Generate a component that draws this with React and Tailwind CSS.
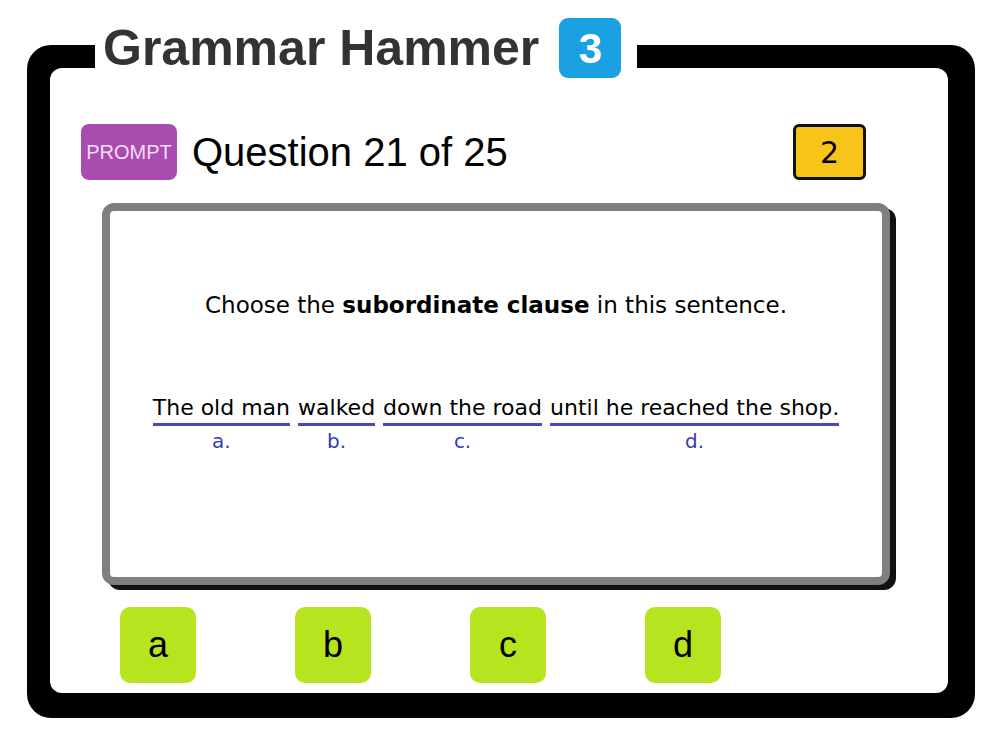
import React from "react";

const comic = "font-['Comic_Sans_MS','DejaVu_Sans',sans-serif]";
const arial = "font-['Liberation_Sans',Arial,sans-serif]";

const segments = [
  { text: "The old man", label: "a." },
  { text: "walked", label: "b." },
  { text: "down the road", label: "c." },
  { text: "until he reached the shop.", label: "d." },
];

export default function App() {
  return (
    <div className="min-h-[750px] w-[1000px] bg-white pt-[45px] pl-[27px]">
      {/* Outer black frame */}
      <div className="relative w-[948px] rounded-[24px] bg-black pt-[23px] pl-[23px] pr-[27px] pb-[25px]">
        {/* Title sitting on the frame */}
        <div className="absolute left-[68px] top-[-27px] flex h-[60px] items-center bg-white pl-2 pr-4">
          <h1 className={`${arial} text-[50px] font-bold leading-none text-[#333333]`}>
            Grammar Hammer
          </h1>
          <span className={`${arial} ml-[20px] flex h-[60px] w-[62px] items-center justify-center rounded-[9px] bg-[#1ba1e2] text-[42px] font-bold text-white`}>
            3
          </span>
        </div>

        {/* White inner panel */}
        <div className="h-[625px] rounded-[12px] bg-white px-[31px] pt-[56px] pb-[10px]">
          {/* Header row */}
          <div className="flex h-[56px] items-center">
            <button className={`${arial} flex h-[56px] w-[96px] items-center justify-center rounded-[8px] bg-[#a84caf] text-[20px] text-[#f8dcf8]`}>
              PROMPT
            </button>
            <span className={`${arial} ml-[15px] text-[40px] text-black`}>Question 21 of 25</span>
            <div className={`${comic} ml-auto mr-[51px] flex h-[56px] w-[73px] items-center justify-center rounded-[6px] border-[3px] border-[#111] bg-[#f8c419] text-[30px] text-black`}>
              2
            </div>
          </div>

          {/* Question card */}
          <div className="mt-[23px] ml-[21px] h-[382px] w-[788px] rounded-[12px] border-[8px] border-[#7f7f7f] bg-white shadow-[6px_5px_0_#111]">
            <div className={`${comic} flex flex-col items-center pt-[79px] text-black`}>
              <p className="text-[23px] leading-[30px]">
                Choose the <b>subordinate clause</b> in this sentence.
              </p>
              <div className="mt-[73px] flex gap-[8px] text-[22px]">
                {segments.map((s) => (
                  <div key={s.label} className="flex flex-col items-center">
                    <span className="leading-[30px]">{s.text}</span>
                    <span className="h-[3px] w-full bg-[#4747c6]" />
                    <span className="mt-[2px] text-[20px] leading-[26px] text-[#3b3bb5]">{s.label}</span>
                  </div>
                ))}
              </div>
            </div>
          </div>

          {/* Answer buttons */}
          <div className="mt-[22px] ml-[39px] flex gap-[99px]">
            {["a", "b", "c", "d"].map((l) => (
              <button
                key={l}
                className={`${arial} flex h-[76px] w-[76px] items-center justify-center rounded-[10px] bg-[#b6e41e] text-[36px] text-black`}
              >
                {l}
              </button>
            ))}
          </div>
        </div>
      </div>
    </div>
  );
}
